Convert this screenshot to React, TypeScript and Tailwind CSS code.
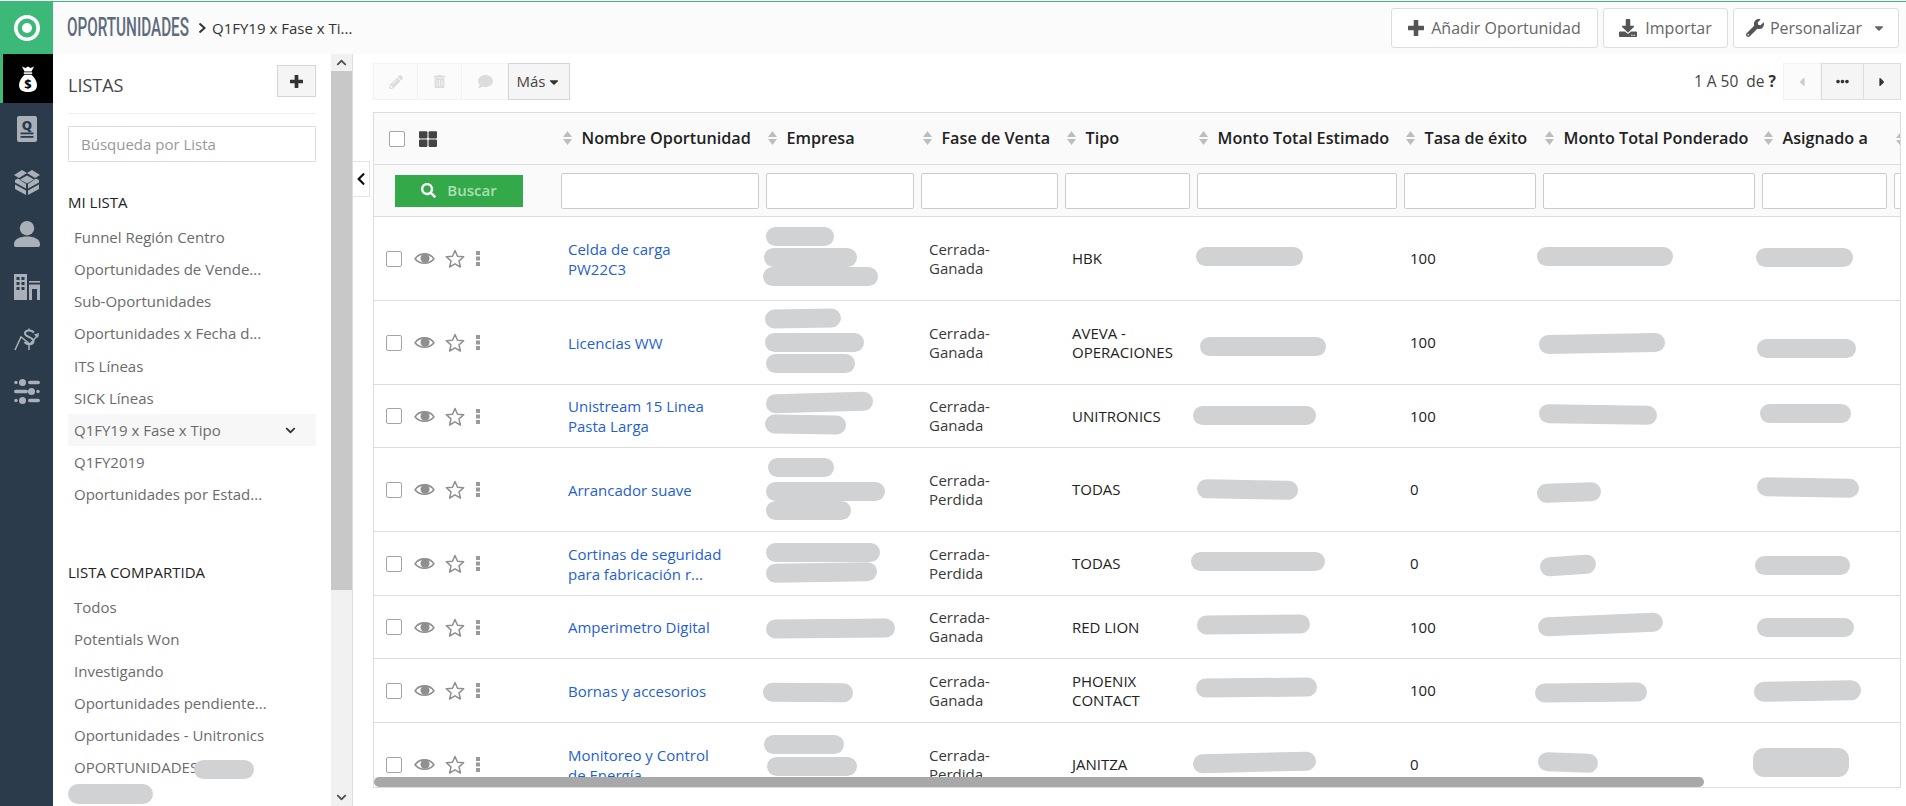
import React from "react";
import {
  FaCaretDown, FaCaretLeft, FaCaretRight, FaChevronDown, FaChevronLeft, FaChevronUp, FaComment, FaDownload,
  FaEllipsisH, FaPencilAlt, FaSearch, FaThLarge, FaTrashAlt, FaWrench,
} from "react-icons/fa";

const GRID = "grid grid-cols-[187px_205px_155px_144px_132px_207px_139px_219px_132px_100px]";

const myList = ["Funnel Región Centro", "Oportunidades de Vende...", "Sub-Oportunidades", "Oportunidades x Fecha d...", "ITS Líneas", "SICK Líneas", "Q1FY19 x Fase x Tipo", "Q1FY2019", "Oportunidades por Estad..."];
const sharedList = ["Todos", "Potentials Won", "Investigando", "Oportunidades pendiente...", "Oportunidades - Unitronics"];
const columns = ["Nombre Oportunidad", "Empresa", "Fase de Venta", "Tipo", "Monto Total Estimado", "Tasa de éxito", "Monto Total Ponderado", "Asignado a", ""];

type Blob = [number, number, number, number?, number?];
type Row = { top: number; h: string; name: string[]; fase: string[]; tipo: string[]; tasa: string; blobs: Blob[] };

const rows: Row[] = [
  { top: 217, h: "h-[84px]", name: ["Celda de carga", "PW22C3"], fase: ["Cerrada-", "Ganada"], tipo: ["HBK"], tasa: "100",
    blobs: [[766, 227, 68], [764, 248, 93], [763, 267, 115], [1196, 247, 107], [1537, 247, 136], [1756, 248, 97]] },
  { top: 301, h: "h-[84px]", name: ["Licencias WW"], fase: ["Cerrada-", "Ganada"], tipo: ["AVEVA -", "OPERACIONES"], tasa: "100",
    blobs: [[765, 309, 76, 19, -1], [765, 333, 99], [766, 354, 89], [1200, 337, 126], [1539, 334, 126, 19, -1], [1757, 339, 99]] },
  { top: 385, h: "h-[63px]", name: ["Unistream 15 Linea", "Pasta Larga"], fase: ["Cerrada-", "Ganada"], tipo: ["UNITRONICS"], tasa: "100",
    blobs: [[766, 393, 107, 19, -1.5], [765, 415, 81, 19, 1], [1193, 406, 123], [1539, 405, 118, 19, 1], [1760, 404, 91]] },
  { top: 448, h: "h-[84px]", name: ["Arrancador suave"], fase: ["Cerrada-", "Perdida"], tipo: ["TODAS"], tasa: "0",
    blobs: [[768, 458, 66], [766, 482, 119], [766, 501, 85], [1197, 480, 101, 19, 1], [1537, 483, 64, 19, -2], [1757, 478, 102, 19, 1]] },
  { top: 532, h: "h-[64px]", name: ["Cortinas de seguridad", "para fabricación r..."], fase: ["Cerrada-", "Perdida"], tipo: ["TODAS"], tasa: "0",
    blobs: [[766, 543, 114], [766, 563, 111, 19, -1], [1191, 552, 134], [1540, 556, 56, 19, -4], [1755, 556, 95]] },
  { top: 596, h: "h-[63px]", name: ["Amperimetro Digital"], fase: ["Cerrada-", "Ganada"], tipo: ["RED LION"], tasa: "100",
    blobs: [[766, 619, 129, 19, -0.5], [1197, 615, 113, 19, -0.5], [1538, 615, 125, 19, -2.5], [1757, 618, 97]] },
  { top: 659, h: "h-[64px]", name: ["Bornas y accesorios"], fase: ["Cerrada-", "Ganada"], tipo: ["PHOENIX", "CONTACT"], tasa: "100",
    blobs: [[763, 683, 90, 19, 0.5], [1196, 678, 121, 19, -0.5], [1535, 683, 112, 19, -0.5], [1754, 681, 107, 20, -1]] },
  { top: 723, h: "h-[84px]", name: ["Monitoreo y Control", "de Energía"], fase: ["Cerrada-", "Perdida"], tipo: ["JANITZA"], tasa: "0",
    blobs: [[764, 735, 80], [767, 757, 90], [1193, 753, 123, 19, -1.5], [1538, 753, 60, 19, 2], [1753, 748, 96, 29]] },
];

function Logo() {
  return (
    <svg viewBox="0 0 26 26" className="h-[26px] w-[26px]">
      <circle cx="13" cy="13" r="11.2" fill="none" stroke="#fff" strokeWidth="3.6" />
      <circle cx="13" cy="13" r="5" fill="#fff" />
    </svg>
  );
}

function BagIcon() {
  return (
    <svg viewBox="0 0 18 26" className="h-[26px] w-[18px]">
      <path d="M3 0.5L6.5 2 9 0.5 11.5 2 15 0.5 12.5 5.5H5.5Z" fill="#fff" />
      <rect x="4.8" y="6.3" width="8.4" height="1.6" fill="#fff" />
      <path d="M5.5 8.7H12.5C15.5 11.5 18 15 18 19 18 23.5 15 26 9 26 3 26 0 23.5 0 19 0 15 2.500 11.500 5.500 8.700Z" fill="#fff" />
      <text x="9" y="22.5" textAnchor="middle" fontSize="13" fontWeight="700" fill="#000" fontFamily="'Open Sans',sans-serif">$</text>
    </svg>
  );
}

function QuoteIcon() {
  return (
    <svg viewBox="0 0 20 26" className="h-[26px] w-[20px]">
      <rect width="20" height="26" rx="2" fill="#a9b0b8" />
      <text x="10" y="13.5" textAnchor="middle" fontSize="13" fontWeight="800" fill="#2b3b4c" fontFamily="'Open Sans',sans-serif">Q</text>
      <rect x="3.5" y="16.500" width="13" height="1.800" fill="#2b3b4c" />
      <rect x="3.5" y="20" width="13" height="1.800" fill="#2b3b4c" />
    </svg>
  );
}

function BoxIcon() {
  return (
    <svg viewBox="0 0 26 26" className="h-[26px] w-[26px]" fill="#a9b0b8">
      <polygon points="0,6 8,1 13,4 5,9" />
      <polygon points="26,6 18,1 13,4 21,9" />
      <polygon points="13,6.500 20,10.500 13,14.500 6,10.500" />
      <polygon points="1,11 4,9.500 12,15 12,19.500 1,13.500" />
      <polygon points="25,11 22,9.500 14,15 14,19.500 25,13.500" />
      <polygon points="1,15.500 12,21.500 12,26 1,20" />
      <polygon points="25,15.500 14,21.500 14,26 25,20" />
    </svg>
  );
}

function UserIcon() {
  return (
    <svg viewBox="0 0 26 26" className="h-[26px] w-[26px]" fill="#a9b0b8">
      <circle cx="13" cy="7.200" r="7.200" />
      <path d="M0 23C0 18 6 15.500 13 15.500S26 18 26 23V24C26 25.500 25 26 24 26H2C1 26 0 25.500 0 24Z" />
    </svg>
  );
}

function BuildingIcon() {
  return (
    <svg viewBox="0 0 26 26" className="h-[26px] w-[26px]">
      <rect width="13" height="26" fill="#a9b0b8" />
      {[3, 8, 13].map((y) =>
        [2.5, 7.5].map((x) => <rect key={`${x}-${y}`} x={x} y={y} width="3" height="3" fill="#2b3b4c" />)
      )}
      <rect x="15" y="7" width="11" height="1.600" fill="#a9b0b8" />
      <rect x="15" y="10.500" width="11" height="15.500" fill="#a9b0b8" />
      <rect x="18" y="15" width="5" height="11" fill="#2b3b4c" />
    </svg>
  );
}

function ChartIcon() {
  return (
    <svg viewBox="0 0 26 23" className="h-[23px] w-[26px]" fill="none" stroke="#a9b0b8" strokeWidth="1.5">
      <polyline points="1,22 7,9 16,16 24,7" />
      <polygon points="25,5 20,6.500 24,10" fill="#a9b0b8" stroke="none" />
      <path d="M20 4.500C17 1.500 11 2 11 5.500 11 9.500 20 9 19.500 13.500 19 17 13 17 10.500 14" strokeWidth="2" />
      <path d="M15 0.500V3M15 17V22" strokeWidth="1.500" />
    </svg>
  );
}

function SlidersIcon() {
  return (
    <svg viewBox="0 0 26 25" className="h-[25px] w-[26px]" fill="#a9b0b8">
      <circle cx="2" cy="3.500" r="1.700" />
      <circle cx="8.500" cy="3.500" r="3.500" />
      <rect x="14" y="1.700" width="12" height="3.600" rx="1.800" />
      <rect x="0" y="10.700" width="14" height="3.600" rx="1.800" />
      <circle cx="17.500" cy="12.500" r="3.500" />
      <circle cx="24" cy="12.500" r="1.700" />
      <circle cx="2" cy="21.500" r="1.700" />
      <circle cx="8.500" cy="21.500" r="3.500" />
      <rect x="14" y="19.700" width="12" height="3.600" rx="1.800" />
    </svg>
  );
}

function PlusIcon({ size, color }: { size: string; color: string }) {
  return (
    <svg viewBox="0 0 14 14" className={size} fill={color}>
      <rect x="5" y="0" width="4" height="14" rx="0.500" />
      <rect x="0" y="5" width="14" height="4" rx="0.500" />
    </svg>
  );
}

function EyeIcon() {
  return (
    <svg viewBox="0 0 20 14" className="ml-[12px] h-[15px] w-[21px] shrink-0">
      <path d="M1 7.300C5 1 15 1 19 7.300 15 13 5 13 1 7.300Z" fill="none" stroke="#8f8f8f" strokeWidth="1.500" />
      <circle cx="10.500" cy="6.800" r="4.300" fill="#8f8f8f" />
    </svg>
  );
}

function StarIcon() {
  return (
    <svg viewBox="0 0 20 19" className="ml-[10px] h-[19px] w-5 shrink-0">
      <polygon points="10,1.500 12.500,7.200 18.700,7.800 14,11.900 15.400,18 10,14.800 4.600,18 6,11.900 1.300,7.800 7.500,7.200" fill="none" stroke="#8f8f8f" strokeWidth="1.500" strokeLinejoin="round" />
    </svg>
  );
}

function SortIcon() {
  return (
    <svg viewBox="0 0 9 14" className="h-[14px] w-[9px] shrink-0" fill="#bdbdbd">
      <polygon points="4.500,0 9,6 0,6" />
      <polygon points="0,8 9,8 4.500,14" />
    </svg>
  );
}

function DotsIcon() {
  return (
    <svg viewBox="0 0 4 15" className="h-[15px] w-[4px]" fill="#9a9a9a">
      <rect width="4" height="4" />
      <rect y="5.500" width="4" height="4" />
      <rect y="11" width="4" height="4" />
    </svg>
  );
}

function Checkbox() {
  return <input type="checkbox" className="h-4 w-4 shrink-0 appearance-none rounded-[2px] border border-[#a5a5a5] bg-white" />;
}

function RailItem({ children }: { children: React.ReactNode }) {
  return <div className="flex h-[52.5px] items-center justify-center">{children}</div>;
}

function TopButton({ w, children }: { w: string; children: React.ReactNode }) {
  return <button className={`${w} flex h-10 items-center justify-center rounded-[3px] border border-[#dedede] bg-white text-base text-[#666]`}>{children}</button>;
}

export default function App() {
  return (
    <div className="flex h-[806px] w-[1906px] flex-col overflow-hidden bg-white font-['Open_Sans',sans-serif] text-[15px] text-[#333]">
      <div className="h-[2px] shrink-0 border-t border-white bg-[#3cb878]" />
      <div className="flex min-h-0 flex-1">
        <nav className="flex w-[53px] shrink-0 flex-col bg-[#2b3b4c]">
          <div className="flex h-[52px] items-center justify-center bg-[#3cb878]"><Logo /></div>
          <div className="flex h-[49px] items-center justify-center border-l-[3px] border-[#3cb878] bg-black"><BagIcon /></div>
          <RailItem><QuoteIcon /></RailItem>
          <RailItem><BoxIcon /></RailItem>
          <RailItem><UserIcon /></RailItem>
          <RailItem><BuildingIcon /></RailItem>
          <RailItem><ChartIcon /></RailItem>
          <RailItem><SlidersIcon /></RailItem>
        </nav>

        <div className="flex min-w-0 flex-1 flex-col">
          <header className="flex h-[52px] shrink-0 items-center justify-between bg-[#fbfbfb] pl-[14px] pr-[7px]">
            <div className="flex items-center">
              <span className="inline-block w-[123px] origin-left scale-x-[0.61] whitespace-nowrap font-['Roboto',sans-serif] text-[25px] font-medium text-[#5d6b7c]">OPORTUNIDADES</span>
              <svg viewBox="0 0 8 10" className="ml-2 h-[10px] w-2" fill="none" stroke="#333" strokeWidth="2"><polyline points="1.500,0.500 6.500,5 1.500,9.500" /></svg>
              <span className="ml-[6px] text-[15px] text-[#333]">Q1FY19 x Fase x Ti...</span>
            </div>
            <div className="flex gap-[5px]">
              <TopButton w="w-[207px]"><PlusIcon size="mr-[7px] h-4 w-4" color="#555" />Añadir Oportunidad</TopButton>
              <TopButton w="w-[125px]"><FaDownload size={18} color="#555" className="mr-2" />Importar</TopButton>
              <TopButton w="w-[166px]"><FaWrench size={18} color="#555" className="mr-[6px]" />Personalizar<FaCaretDown size={14} color="#666" className="ml-[10px]" /></TopButton>
            </div>
          </header>

          <div className="flex min-h-0 flex-1">
            <aside className="w-[278px] shrink-0 overflow-hidden px-[15px]">
              <div className="mt-[11px] flex h-8 items-start justify-between">
                <span className="pt-2 text-[18px] leading-6 text-[#444]">LISTAS</span>
                <button className="flex h-8 w-[39px] items-center justify-center border border-[#d5d5d5] bg-[#f5f5f5]"><PlusIcon size="h-[13px] w-[13px]" color="#333" /></button>
              </div>
              <div className="mt-4 border-t border-[#eee]" />
              <input className="mt-[12px] h-9 w-full border border-[#ddd] px-3 text-[15px] outline-none placeholder:text-[#999]" placeholder="Búsqueda por Lista" />
              <div className="mt-[30px] text-[15px] leading-5 text-[#222]">MI LISTA</div>
              <ul className="mt-[9px]">
                {myList.map((t, i) => (
                  <li key={t} className={`flex h-[32.2px] items-center justify-between px-[6px] text-[#6b6b6b] ${i === 6 ? "bg-[#f7f7f7]" : ""}`}>
                    {t}
                    {i === 6 && <FaChevronDown size={11} color="#333" className="mr-[14px]" />}
                  </li>
                ))}
              </ul>
              <div className="mt-[51px] text-[15px] leading-5 text-[#222]">LISTA COMPARTIDA</div>
              <ul className="mt-[9px]">
                {sharedList.map((t) => (
                  <li key={t} className="flex h-[32.2px] items-center px-[6px] text-[#6b6b6b]">{t}</li>
                ))}
                <li className="relative flex h-[32.2px] items-center px-[6px] text-[#6b6b6b]">
                  OPORTUNIDADES
                  <span className="absolute left-[126px] top-2 h-[19px] w-[60px] rounded-full bg-[#d1d2d4]" />
                </li>
                <li className="relative h-8">
                  <span className="absolute left-0 top-0 h-5 w-[85px] rounded-full bg-[#d1d2d4]" />
                </li>
              </ul>
            </aside>

            <div className="flex w-[22px] shrink-0 flex-col items-center border-r border-[#ddd] bg-[#f1f1f1]">
              <div className="flex h-[17px] w-full items-center justify-center"><FaChevronUp size={11} color="#505050" /></div>
              <div className="h-[519px] w-full bg-[#c8c8c8]" />
              <div className="flex-1" />
              <div className="flex h-[17px] w-full items-center justify-center"><FaChevronDown size={11} color="#505050" /></div>
            </div>

            <div className="w-5 shrink-0">
              <div className="mt-[107px] flex h-9 w-[17px] items-center justify-center border border-l-0 border-[#e4e4e4] bg-white">
                <FaChevronLeft size={14} color="#111" />
              </div>
            </div>

            <main className="min-w-0 flex-1 pr-[5px] pt-[9px]">
              <div className="flex h-[37px] justify-between">
                <div className="flex">
                  <div className="flex w-[45px] items-center justify-center border border-[#f2f2f2] bg-[#fbfbfb]"><FaPencilAlt size={14} color="#dcdcdc" /></div>
                  <div className="flex w-[44px] items-center justify-center border-y border-r border-[#f2f2f2] bg-[#fbfbfb]"><FaTrashAlt size={13} color="#dcdcdc" /></div>
                  <div className="flex w-[46px] items-center justify-center border-y border-[#f2f2f2] bg-[#fbfbfb]"><FaComment size={15} color="#dcdcdc" /></div>
                  <button className="flex w-[62px] items-center justify-center border border-[#d5d5d5] bg-[#f5f5f5] text-[#444]">Más<FaCaretDown size={14} color="#333" className="ml-[2px]" /></button>
                </div>
                <div className="flex items-center">
                  <span className="mr-[7px] text-[15.5px] text-[#444]">1 A 50&nbsp; de <b className="text-[#333]">?</b></span>
                  <div className="flex h-full w-[38px] items-center justify-center border border-[#f2f2f2] bg-[#fbfbfb]"><FaCaretLeft size={14} color="#ccc" /></div>
                  <div className="flex h-full w-[43px] items-center justify-center border border-[#ddd] bg-[#f5f5f5]"><FaEllipsisH size={13} color="#333" /></div>
                  <div className="flex h-full w-[37px] items-center justify-center border-y border-r border-[#ddd] bg-[#f5f5f5]"><FaCaretRight size={14} color="#333" /></div>
                </div>
              </div>

              <div className="relative mt-3 h-[676px] overflow-hidden border border-[#ddd]">
                <div className={`${GRID} h-[52px] items-center border-b border-[#ddd] bg-[#fafafa]`}>
                  <div className="flex items-center gap-[14px] pl-[15px]">
                    <Checkbox />
                    <FaThLarge size={18} color="#444" />
                  </div>
                  {columns.map((c, i) => (
                    <div key={i} className="flex items-center gap-[9.5px] whitespace-nowrap pl-[2px] text-[16.2px] font-semibold text-[#222]">
                      <SortIcon />
                      {c}
                    </div>
                  ))}
                </div>

                <div className={`${GRID} h-[52px] items-center border-b border-[#ddd] bg-[#fafafa]`}>
                  <div className="pl-[21px]">
                    <button className="flex h-8 w-32 items-center justify-center gap-[11px] bg-[#33a94a] text-[15px] font-semibold text-[#a9e0b3]">
                      <FaSearch size={15} color="#fff" />Buscar
                    </button>
                  </div>
                  {columns.map((c, i) => (
                    <div key={i} className="pr-[7px]">
                      <input aria-label={c || "filtro"} className="h-9 w-full rounded-[2px] border border-[#ccc] bg-white outline-none" />
                    </div>
                  ))}
                </div>

                {rows.map((r) => (
                  <div key={r.top} className={`${GRID} ${r.h} relative items-center border-b border-[#ddd] leading-[19px]`}>
                    <div className="flex items-center pl-3">
                      <Checkbox />
                      <EyeIcon />
                      <StarIcon />
                      <span className="ml-[11px] flex"><DotsIcon /></span>
                    </div>
                    <div className="pl-[7px] leading-5 text-[#1f5fd1]">
                      {r.name.map((l) => <div key={l}>{l}</div>)}
                    </div>
                    <div />
                    <div className="pl-2 text-[#3a3a3a]">
                      {r.fase.map((l) => <div key={l}>{l}</div>)}
                    </div>
                    <div className="pl-[7px] text-[#222]">
                      {r.tipo.map((l) => <div key={l}>{l}</div>)}
                    </div>
                    <div />
                    <div className="pl-[6px] text-[#222]">{r.tasa}</div>
                    {r.blobs.map(([x, y, w, h, rot], i) => (
                      <span
                        key={i}
                        className={`absolute bg-[#d1d2d4] ${(h ?? 19) > 25 ? "rounded-[11px]" : "rounded-full"}`}
                        style={{ left: x - 374, top: y - r.top, width: w, height: h ?? 19, rotate: `${rot ?? 0}deg` }}
                      />
                    ))}
                  </div>
                ))}

                <div className="absolute bottom-0 left-0 h-[10px] w-[1330px] rounded-full bg-[#a8a8a8]" />
              </div>
            </main>
          </div>
        </div>
      </div>
    </div>
  );
}
